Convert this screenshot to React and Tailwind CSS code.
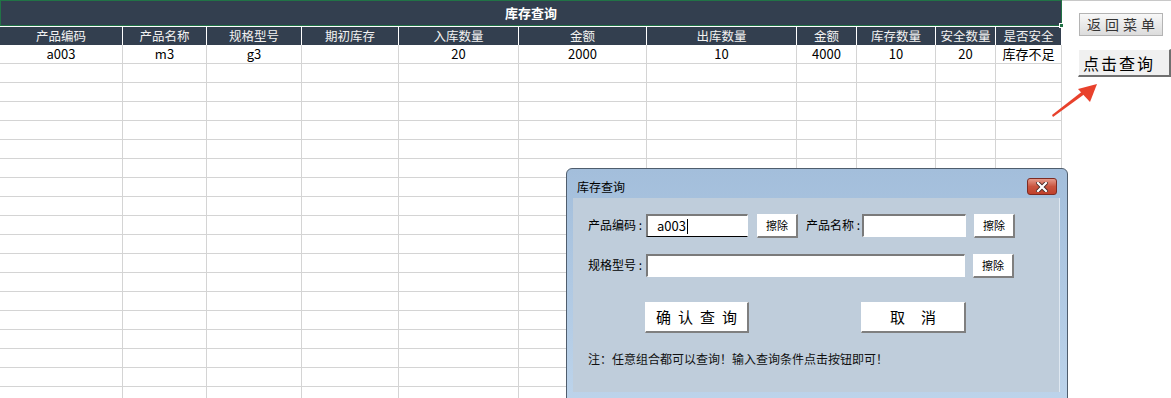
import React from 'react';

const headers = ['产品编码', '产品名称', '规格型号', '期初库存', '入库数量', '金额', '出库数量', '金额', '库存数量', '安全数量', '是否安全'];
const firstRow = ['a003', 'm3', 'g3', '', '20', '2000', '10', '4000', '10', '20', '库存不足'];
const emptyRows = Array.from({ length: 18 }, () => Array(11).fill(''));

const gridCols = 'grid grid-cols-[123px_84px_95px_97px_120px_128px_150px_60px_79px_60px_66px]';

function SunkenInput({ width, value, focused }) {
  return (
    <div
      className={`h-[23px] ${width} shrink-0 bg-white border-t-2 border-l-2 border-t-[#7a7a7a] border-l-[#7a7a7a] border-r border-r-white ${
        focused ? 'border-b border-b-black' : 'border-b border-b-white'
      } flex items-center pl-[9px] text-[13px] text-black`}
    >
      {value}
      {focused && <span className="inline-block w-px h-[15px] bg-black ml-px" />}
    </div>
  );
}

function RaisedButton({ className, children }) {
  return (
    <div
      className={`shrink-0 whitespace-nowrap bg-white border-t border-l border-t-white border-l-white border-r-2 border-b-2 border-r-[#7f7f7f] border-b-[#7f7f7f] flex items-center justify-center text-black ${className}`}
    >
      {children}
    </div>
  );
}

export default function App() {
  return (
    <div
      className="relative w-[1171px] h-[398px] overflow-hidden bg-white flex"
      style={{ fontFamily: '"Noto Sans CJK SC", "Noto Sans", sans-serif' }}
    >
      {/* Sheet */}
      <div className="w-[1062px] shrink-0">
        <div className="h-[26px] border border-[#217346] bg-[#333f4f] flex items-center justify-center text-white font-bold text-[13px]">
          库存查询
        </div>
        <div className="h-px bg-white" />
        <div className={`${gridCols} h-[18px] bg-[#333f4f]`}>
          {headers.map((h, i) => (
            <div key={i} className="border-r border-white text-center text-[12.5px] leading-[18px] text-[#f2f2f2]">
              {h}
            </div>
          ))}
        </div>
        {[firstRow, ...emptyRows].map((row, r) => (
          <div key={r} className={`${gridCols} h-[19px]`}>
            {row.map((c, i) => (
              <div key={i} className="border-r border-b border-[#d4d4d4] text-center text-[13px] leading-[18px] text-black">
                {c}
              </div>
            ))}
          </div>
        ))}
      </div>

      {/* Right side buttons */}
      <div className="flex-1 min-w-0 border-t border-[#c8c8c8] flex flex-col pl-[16px] pt-[12px]">
        <div className="ml-px w-[84px] h-[23px] shrink-0 whitespace-nowrap border border-[#b4b4b4] bg-gradient-to-b from-[#f8f8f8] to-[#dcdcdc] flex items-center justify-center text-[14px] tracking-[4px] text-[#333] pl-[4px]">
          返回菜单
        </div>
        <div className="mt-[13px] w-[93px] h-[28px] shrink-0 whitespace-nowrap bg-[#f0f0f0] border-t border-l border-t-white border-l-white border-r-2 border-b-2 border-r-[#6f6f6f] border-b-[#6f6f6f] flex items-center pl-[4px] text-[16px] tracking-[2px] text-black">
          点击查询
        </div>
      </div>

      {/* selection handle */}
      <div className="absolute left-[1059px] top-[23px] w-[5px] h-[5px] bg-[#217346] border border-white" />

      {/* Red arrow */}
      <svg className="absolute left-[1048px] top-[80px]" width="56" height="42" viewBox="0 0 56 42">
        <polygon points="5,37 38,13 36,10 4,35" fill="#e8412c" />
        <polygon points="49,4 30,9 42,22" fill="#e8412c" />
      </svg>

      {/* Dialog window */}
      <div className="absolute left-[566px] top-[168px] w-[502px] h-[240px] rounded-t-[6px] border border-[#4f5d6d] bg-gradient-to-b from-[#a3bedb] to-[#bdd4eb] flex flex-col">
        <div className="h-[29px] shrink-0 flex items-start pt-[10px] pl-[10px] pr-[10px]">
          <span className="text-[12px] text-black leading-[16px]">库存查询</span>
          <div className="ml-auto mt-[-1px] w-[30px] h-[17px] rounded-[3px] border border-[#7d2b22] bg-gradient-to-b from-[#e49a8b] via-[#c9543e] to-[#c0402b] flex items-center justify-center">
            <svg width="12" height="10" viewBox="0 0 12 10">
              <path d="M2 1 L10 9 M10 1 L2 9" stroke="#4a2a26" strokeWidth="4" strokeLinecap="square" />
              <path d="M2 1 L10 9 M10 1 L2 9" stroke="#ffffff" strokeWidth="2.2" strokeLinecap="square" />
            </svg>
          </div>
        </div>
        <div className="ml-[6px] w-[487px] h-[194px] bg-[#bfcddb] border-r border-r-[#dfe8f1] pl-[15px] pt-[16px] text-[12px] text-black">
          <div className="flex items-start">
            <div className="w-[58px] shrink-0 h-[23px] leading-[22px] whitespace-nowrap">产品编码 :</div>
            <SunkenInput width="w-[102px]" value="a003" focused />
            <RaisedButton className="ml-[9px] w-[41px] h-[24px] text-[11px]">擦除</RaisedButton>
            <div className="ml-[8px] w-[56px] shrink-0 h-[23px] leading-[22px] whitespace-nowrap">产品名称 :</div>
            <SunkenInput width="w-[104px]" value="" />
            <RaisedButton className="ml-[8px] w-[41px] h-[24px] text-[11px]">擦除</RaisedButton>
          </div>
          <div className="flex items-start mt-[16px]">
            <div className="w-[58px] shrink-0 h-[23px] leading-[22px] whitespace-nowrap">规格型号 :</div>
            <SunkenInput width="w-[319px]" value="" />
            <RaisedButton className="ml-[8px] w-[41px] h-[24px] text-[11px]">擦除</RaisedButton>
          </div>
          <div className="flex mt-[24px]">
            <RaisedButton className="ml-[57px] w-[104px] h-[31px] text-[15px] tracking-[7px] pl-[7px]">确认查询</RaisedButton>
            <RaisedButton className="ml-[112px] w-[105px] h-[31px] text-[15px] tracking-[16px] pl-[16px]">取消</RaisedButton>
          </div>
          <div className="mt-[18px] text-[12px] leading-[16px] text-[#111] whitespace-nowrap">注：任意组合都可以查询！输入查询条件点击按钮即可！</div>
        </div>
      </div>
    </div>
  );
}
